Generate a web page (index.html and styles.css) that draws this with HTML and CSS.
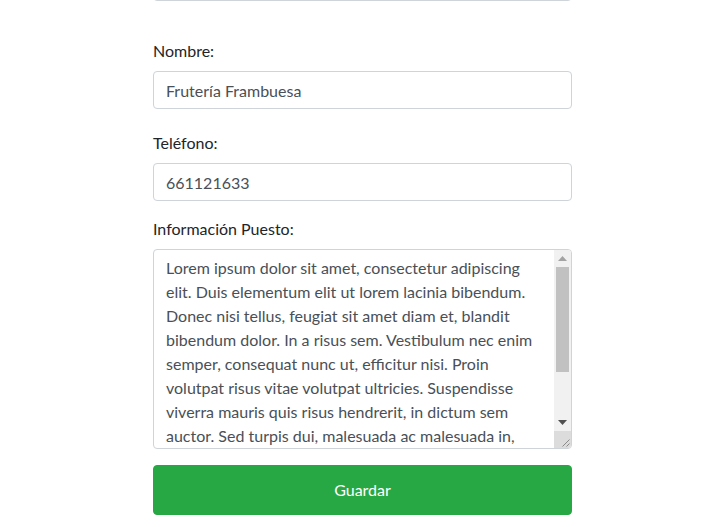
FILE: index.html
```html
<!DOCTYPE html>
<html lang="es">
<head>
<meta charset="utf-8">
<title>Puesto</title>
<link rel="stylesheet" href="styles.css">
</head>
<body>
<form class="form">
  <div class="prev-control"></div>
  <div class="group group-first">
    <label class="label" for="nombre">Nombre:</label>
    <input class="control" id="nombre" type="text" value="Frutería Frambuesa">
  </div>
  <div class="group">
    <label class="label" for="telefono">Teléfono:</label>
    <input class="control" id="telefono" type="text" value="661121633">
  </div>
  <div class="group">
    <label class="label" for="info">Información Puesto:</label>
    <div class="area-wrap">
      <textarea class="control area" id="info">Lorem ipsum dolor sit amet, consectetur adipiscing
elit. Duis elementum elit ut lorem lacinia bibendum.
Donec nisi tellus, feugiat sit amet diam et, blandit
bibendum dolor. In a risus sem. Vestibulum nec enim
semper, consequat nunc ut, efficitur nisi. Proin
volutpat risus vitae volutpat ultricies. Suspendisse
viverra mauris quis risus hendrerit, in dictum sem
auctor. Sed turpis dui, malesuada ac malesuada in,
ultricies vel ligula. Maecenas euismod lorem sit
amet justo tincidunt, sed fringilla nulla tempus.
Nam vitae lectus at erat volutpat aliquet.</textarea>
      <div class="sbar" aria-hidden="true">
        <div class="sbtn">
          <svg width="9" height="5" viewBox="0 0 9 5"><polygon points="0,5 9,5 4.5,0" fill="#a3a3a3"/></svg>
        </div>
        <div class="strack"><div class="sthumb"></div></div>
        <div class="sbtn">
          <svg width="9" height="5" viewBox="0 0 9 5"><polygon points="0,0 9,0 4.5,5" fill="#505050"/></svg>
        </div>
        <div class="scorner">
          <svg width="17" height="17" viewBox="0 0 17 17"><line x1="15.5" y1="8.5" x2="8.5" y2="15.5" stroke="#8a8a8a" stroke-width="1"/><line x1="15.5" y1="12.5" x2="12.5" y2="15.5" stroke="#8a8a8a" stroke-width="1"/></svg>
        </div>
      </div>
    </div>
  </div>
  <button class="btn" type="button">Guardar</button>
</form>
</body>
</html>
```
FILE: styles.css
```css
html, body {
  margin: 0;
  padding: 0;
  background: #fff;
}
body {
  font-family: Lato, "Open Sans", sans-serif;
  font-size: 16px;
  line-height: 24px;
  color: #212529;
  overflow: hidden;
}
.form {
  width: 419px;
  margin-left: 153px;
  display: flex;
  flex-direction: column;
}
.prev-control {
  height: 38px;
  margin-top: -37px;
  box-sizing: border-box;
  border: 1px solid #ced4da;
  border-radius: 4px;
  margin-bottom: 38px;
}
.group {
  display: flex;
  flex-direction: column;
  margin-bottom: 16px;
}
.group-first {
  margin-bottom: 22px;
}
.label {
  display: block;
  margin-bottom: 8px;
  line-height: 24px;
}
.control {
  box-sizing: border-box;
  width: 100%;
  height: 38px;
  padding: 6px 12px;
  font-family: inherit;
  font-size: 16px;
  line-height: 24px;
  color: #495057;
  background: #fff;
  border: 1px solid #ced4da;
  border-radius: 4px;
  outline: none;
  margin: 0;
}
.area-wrap {
  position: relative;
  height: 200px;
}
.area {
  display: block;
  height: 200px;
  padding-right: 29px;
  resize: none;
  white-space: pre-wrap;
  overflow: hidden;
  scrollbar-width: none;
}
.sbar {
  position: absolute;
  top: 1px;
  right: 1px;
  bottom: 1px;
  width: 17px;
  display: flex;
  flex-direction: column;
  background: #f1f1f1;
  border-top-right-radius: 3px;
  border-bottom-right-radius: 3px;
  overflow: hidden;
}
.sbtn {
  height: 17px;
  flex: none;
  display: flex;
  align-items: center;
  justify-content: center;
}
.strack {
  flex: 1;
  display: flex;
  flex-direction: column;
}
.sthumb {
  height: 105px;
  margin: 0 2px;
  background: #c1c1c1;
}
.scorner {
  height: 17px;
  flex: none;
  background: #dcdcdc;
}
.scorner svg {
  display: block;
}
.btn {
  box-sizing: border-box;
  width: 100%;
  height: 50px;
  padding: 12px 16px;
  font-family: inherit;
  font-size: 16px;
  line-height: 24px;
  color: #fff;
  background: #28a745;
  border: 1px solid #28a745;
  border-radius: 4px;
  cursor: pointer;
}
```
